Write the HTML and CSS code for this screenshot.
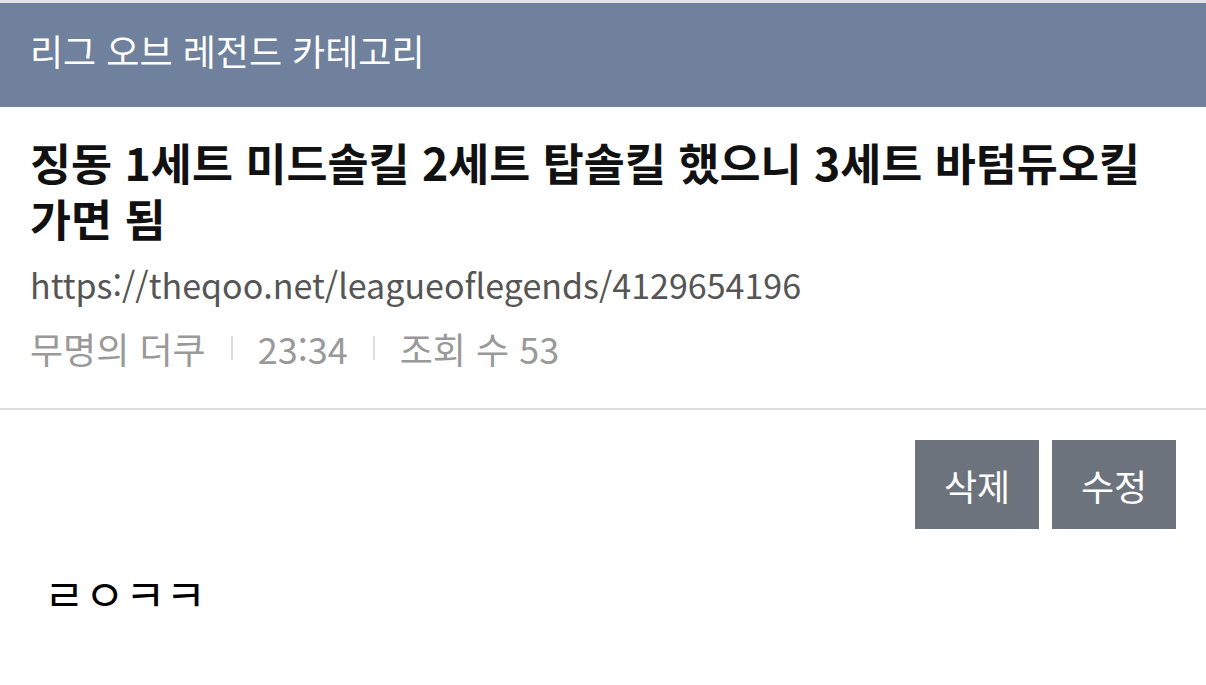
FILE: index.html
```html
<!DOCTYPE html>
<html lang="ko">
<head>
    <meta charset="UTF-8">
    <meta name="viewport" content="width=device-width, initial-scale=1.0">
    <title>리그 오브 레전드 카테고리</title>
    <link rel="stylesheet" href="styles.css">
</head>
<body>
    <div class="topline"></div>
    <div class="category">리그 오브 레전드 카테고리</div>

    <div class="post-head">
        <h1 class="post-title">징동 1세트 미드솔킬 2세트 탑솔킬 했으니 3세트 바텀듀오킬 가면 됨</h1>
        <div class="post-url">https://theqoo.net/leagueoflegends/4129654196</div>
        <div class="post-meta">
            <span>무명의 더쿠</span>
            <span class="sep"></span>
            <span>23:34</span>
            <span class="sep"></span>
            <span>조회 수 53</span>
        </div>
    </div>

    <div class="actions">
        <button class="btn">삭제</button>
        <button class="btn">수정</button>
    </div>

    <div class="post-body">ㄹㅇㅋㅋ</div>
</body>
</html>
```

FILE: styles.css
```css
body {
    margin: 0;
    font-family: "Noto Sans CJK KR", "Noto Sans", sans-serif;
    background: #fff;
    color: #111;
}
.topline {
    height: 3px;
    background: #e3e1e6;
}
.category {
    height: 104px;
    line-height: 94px;
    padding: 0 30px;
    background: #6f819c;
    color: #fff;
    font-size: 36px;
}
.post-head {
    padding: 27px 30px 36px;
    border-bottom: 2px solid #dedede;
}
.post-title {
    margin: 0;
    font-size: 44.6px;
    font-weight: bold;
    line-height: 56px;
    color: #111;
}
.post-url {
    margin-top: 15px;
    font-size: 34px;
    line-height: 48px;
    color: #555;
}
.post-meta {
    margin-top: 15px;
    display: flex;
    align-items: center;
    font-size: 36px;
    line-height: 48px;
    color: #999;
}
.post-meta .sep {
    width: 2px;
    height: 24px;
    background: #ddd;
    margin: 0 25px;
}
.actions {
    display: flex;
    justify-content: flex-end;
    gap: 13px;
    padding: 30px 30px 0;
}
.btn {
    width: 124px;
    height: 89px;
    border: none;
    background: #6c737c;
    color: #fff;
    font-family: inherit;
    font-size: 36px;
}
.post-body {
    padding: 34px 44px;
    font-size: 44px;
    line-height: 60px;
    color: #000;
}
```
